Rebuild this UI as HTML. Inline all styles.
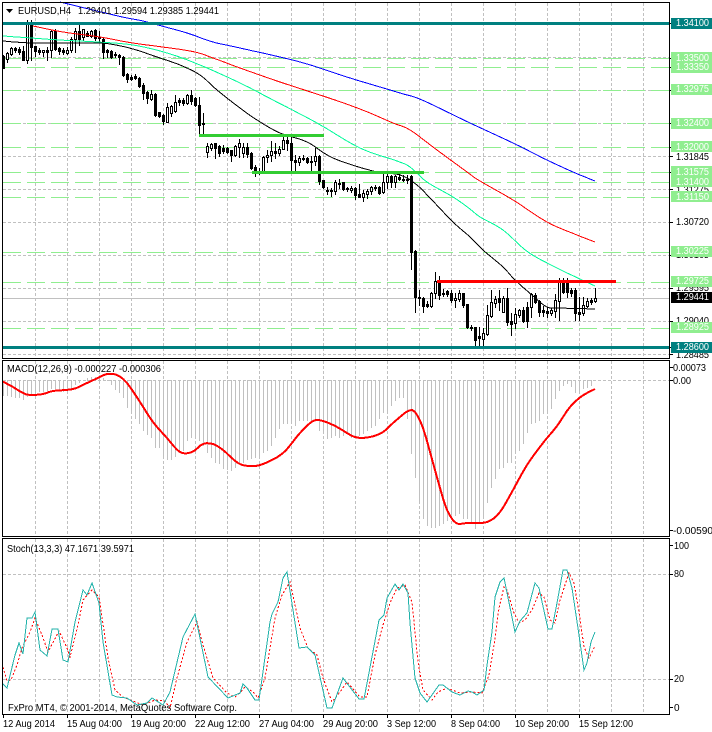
<!DOCTYPE html>
<html>
<head>
<meta charset="utf-8">
<style>
html,body{margin:0;padding:0;background:#fff;width:712px;height:732px;overflow:hidden}
svg{display:block;position:absolute;left:0;top:0}
text{font-family:"Liberation Sans",sans-serif;font-size:10px;fill:#000}
.w{fill:#fff}
.l{shape-rendering:crispEdges;fill:none}
polyline{shape-rendering:crispEdges}
</style>
</head>
<body>
<svg id="s" width="712" height="732" viewBox="0 0 712 732" xmlns="http://www.w3.org/2000/svg">
<!-- vertical grid -->
<g class="l" stroke="#c0c0c0" stroke-dasharray="3 2">
<path d="M35.5 3V358M67.5 3V358M99.5 3V358M131.5 3V358M163.5 3V358M195.5 3V358M227.5 3V358M259.5 3V358M291.5 3V358M323.5 3V358M355.5 3V358M387.5 3V358M419.5 3V358M451.5 3V358M483.5 3V358M515.5 3V358M547.5 3V358M579.5 3V358M611.5 3V358M643.5 3V358"/>
<path d="M35.5 361V536M67.5 361V536M99.5 361V536M131.5 361V536M163.5 361V536M195.5 361V536M227.5 361V536M259.5 361V536M291.5 361V536M323.5 361V536M355.5 361V536M387.5 361V536M419.5 361V536M451.5 361V536M483.5 361V536M515.5 361V536M547.5 361V536M579.5 361V536M611.5 361V536M643.5 361V536"/>
<path d="M35.5 539V714M67.5 539V714M99.5 539V714M131.5 539V714M163.5 539V714M195.5 539V714M227.5 539V714M259.5 539V714M291.5 539V714M323.5 539V714M355.5 539V714M387.5 539V714M419.5 539V714M451.5 539V714M483.5 539V714M515.5 539V714M547.5 539V714M579.5 539V714M611.5 539V714M643.5 539V714"/>
<path d="M3 57.5H669M3 90.5H669M3 123.5H669M3 156.5H669M3 189.5H669M3 222.5H669M3 255.5H669M3 288.5H669M3 321.5H669M3 354.5H669"/>
<path d="M3 380.5H669M3 574.5H669M3 679.5H669"/>
</g>
<!-- green level lines -->
<path class="l" stroke="#90ee90" stroke-dasharray="18 6" d="M3 58.5H669M3 67.5H669M3 90.5H669M3 123.5H669M3 147.5H669M3 172.5H669M3 182.5H669M3 197.5H669M3 252.5H669M3 282.5H669M3 328.5H669"/>
<path class="l" stroke="#c0c0c0" d="M3 298.5H669"/>
<g id="hist"></g>
<g id="c"></g>
<!-- moving averages -->
<g fill="none" stroke-width="1">
<polyline class="sm" stroke="#0000ff" points="60,2 118,16 143,21 158,25 187,33 213,42 240,48 300,62 350,78 400,93 422,100 470,123 513,143 547,160 573,172 595,181"/>
<polyline class="sm" stroke="#ff0000" points="33,26 63,32 100,37 133,43 190,51 213,58 240,68 280,82 335,100 365,111 393,123 410,130 437,150 467,172 480,181 513,200 547,222 577,235 595,242"/>
<polyline class="sm" stroke="#00fa9a" points="3,36 17,37 60,40 97,42 133,45 167,53 200,65 240,83 273,100 317,123 360,148 397,161 410,167 427,182 453,197 470,209 480,217 503,230 528,252 557,268 580,279 595,286"/>
<polyline class="sm" stroke="#000000" points="3,41 33,43 90,43 110,44 133,49 157,57 180,65 200,75 217,90 240,108 257,120 280,133 307,142 333,158 373,171 400,175 417,185 430,198 453,222 470,237 483,250 503,267 515,280 532,295 547,307 560,308 595,309"/>
</g>
<!-- objects -->
<rect x="3" y="22" width="666" height="3" fill="#008080"/>
<rect x="3" y="346" width="666" height="3" fill="#008080"/>
<rect x="199" y="134" width="125" height="3" fill="#32cd32"/>
<rect x="252" y="171" width="172" height="3" fill="#32cd32"/>
<rect x="437" y="280" width="179" height="3" fill="#ff0000"/>
<!-- MACD -->
<polyline class="sm" fill="none" stroke="#ff0000" stroke-width="2" points="3,381.7 13,387 23,393 30,395 43,394 53,391 73,389 87,383 100,377 107,374 117,375 127,383 140,402 153,422 167,438 180,452 192,452 203,444 213,444 223,450 238,463 250,466 263,464 283,453 300,433 313,421 323,421 337,427 355,437 370,437 383,432 393,423 408,411 415,412 423,428 430,452 440,488 447,510 456,523 467,523 487,522 500,512 513,490 527,465 543,443 557,426 570,407 582,396 595,389"/>
<!-- Stoch -->
<polyline fill="none" stroke="#ff0000" stroke-dasharray="2 2" points="3,667 7,681 11,680 17,665 22,648 30,632 35,618 42,635 48,652 59,631 67,648 70,657 78,625 83,600 92,590 99,597 108,658 115,690 123,697 133,701 143,705 155,700 165,701 170,708 177,678 187,642 197,622 203,645 213,678 227,693 235,697 240,693 245,687 253,692 258,698 265,678 275,618 282,595 290,582 300,628 308,648 317,655 323,678 332,702 340,692 347,682 360,697 367,697 375,655 383,625 390,603 397,588 405,585 412,602 418,662 423,690 432,700 438,692 447,688 460,693 472,692 482,693 489,675 494,645 499,608 504,587 507,590 514,613 519,623 525,620 532,610 539,593 544,597 550,620 555,623 560,600 569,573 574,583 579,612 584,647 589,658 595,646"/>
<polyline fill="none" stroke="#20b2aa" stroke-width="1" points="3,684 7,688 15,655 19,643 23,654 27,618 32,618 35,612 40,650 47,656 52,629 58,629 63,660 68,662 75,622 83,590 87,595 92,583 99,603 103,642 112,695 117,697 127,698 137,705 147,703 152,698 163,705 170,692 183,637 195,614 208,677 228,698 240,693 243,684 247,688 255,700 259,700 270,622 272,614 278,602 283,578 287,572 299,648 307,647 315,655 327,708 332,708 343,678 359,699 364,699 379,620 384,615 387,598 395,584 399,590 403,584 408,593 410,623 415,678 420,693 427,702 439,685 443,685 452,692 460,695 468,691 472,692 477,695 484,690 487,665 492,632 495,597 500,582 504,578 515,632 520,621 527,613 535,583 539,588 548,629 552,629 557,603 563,570 567,570 572,588 579,635 584,670 587,663 591,642 595,632"/>
<!-- frames -->
<g fill="#000">
<rect x="2" y="2" width="668" height="1"/>
<rect x="2" y="358" width="668" height="1"/>
<rect x="2" y="360" width="668" height="1"/>
<rect x="2" y="536" width="668" height="1"/>
<rect x="2" y="538" width="668" height="1"/>
<rect x="2" y="714" width="668" height="1"/>
<rect x="2" y="2" width="1" height="356"/>
<rect x="2" y="360" width="1" height="176"/>
<rect x="2" y="538" width="1" height="176"/>
<rect x="669" y="2" width="1" height="356"/>
<rect x="669" y="360" width="1" height="176"/>
<rect x="669" y="538" width="1" height="176"/>
<path d="M670 23h3v1h-3zM670 58h3v1h-3zM670 67h3v1h-3zM670 90h3v1h-3zM670 123h3v1h-3zM670 147h3v1h-3zM670 156h3v1h-3zM670 172h3v1h-3zM670 189h3v1h-3zM670 222h3v1h-3zM670 255h3v1h-3zM670 288h3v1h-3zM670 321h3v1h-3zM670 347h3v1h-3zM670 354h3v1h-3zM670 367h3v1h-3zM670 380h3v1h-3zM670 530h3v1h-3zM670 545h3v1h-3zM670 574h3v1h-3zM670 679h3v1h-3zM670 707h3v1h-3z"/>
<path d="M3 715h1v3h-1zM67 715h1v3h-1zM131 715h1v3h-1zM195 715h1v3h-1zM259 715h1v3h-1zM323 715h1v3h-1zM387 715h1v3h-1zM451 715h1v3h-1zM515 715h1v3h-1zM579 715h1v3h-1z"/>
<path d="M6 9h7l-3.5 4z"/>
</g>
<!-- chart texts -->
<text x="18" y="14" textLength="53" lengthAdjust="spacingAndGlyphs">EURUSD,H4</text>
<text x="78" y="14" textLength="141" lengthAdjust="spacingAndGlyphs">1.29401 1.29594 1.29385 1.29441</text>
<text x="7" y="372" textLength="154" lengthAdjust="spacingAndGlyphs">MACD(12,26,9) -0.000227 -0.000306</text>
<text x="7" y="552" textLength="127" lengthAdjust="spacingAndGlyphs">Stoch(13,3,3) 47.1671 39.5971</text>
<text x="8" y="711" textLength="229" lengthAdjust="spacingAndGlyphs">FxPro MT4, © 2001-2014, MetaQuotes Software Corp.</text>
<!-- price axis: plain -->
<g>
<text x="676" y="160" textLength="33" lengthAdjust="spacingAndGlyphs">1.31845</text>
<text x="676" y="193" textLength="33" lengthAdjust="spacingAndGlyphs">1.31275</text>
<text x="676" y="225" textLength="33" lengthAdjust="spacingAndGlyphs">1.30720</text>
<text x="676" y="258" textLength="33" lengthAdjust="spacingAndGlyphs">1.30165</text>
<text x="676" y="291" textLength="33" lengthAdjust="spacingAndGlyphs">1.29595</text>
<text x="676" y="324" textLength="33" lengthAdjust="spacingAndGlyphs">1.29040</text>
<text x="676" y="358" textLength="33" lengthAdjust="spacingAndGlyphs">1.28485</text>
</g>
<!-- price axis: boxed -->
<g fill="#90ee90">
<rect x="671" y="52" width="41" height="11"/>
<rect x="671" y="62" width="41" height="11"/>
<rect x="671" y="84" width="41" height="11"/>
<rect x="671" y="118" width="41" height="11"/>
<rect x="671" y="141" width="41" height="11"/>
<rect x="671" y="166" width="41" height="11"/>
<rect x="671" y="176" width="41" height="11"/>
<rect x="671" y="191" width="41" height="11"/>
<rect x="671" y="246" width="41" height="11"/>
<rect x="671" y="276" width="41" height="11"/>
<rect x="671" y="322" width="41" height="11"/>
</g>
<rect x="671" y="18" width="41" height="11" fill="#008080"/>
<rect x="671" y="342" width="41" height="11" fill="#008080"/>
<rect x="671" y="292" width="41" height="11" fill="#000"/>
<g>
<text class="w" x="676" y="26" textLength="33" lengthAdjust="spacingAndGlyphs">1.34100</text>
<text class="w" x="676" y="61" textLength="33" lengthAdjust="spacingAndGlyphs">1.33500</text>
<text class="w" x="676" y="70" textLength="33" lengthAdjust="spacingAndGlyphs">1.33350</text>
<text class="w" x="676" y="92" textLength="33" lengthAdjust="spacingAndGlyphs">1.32975</text>
<text class="w" x="676" y="126" textLength="33" lengthAdjust="spacingAndGlyphs">1.32400</text>
<text class="w" x="676" y="150" textLength="33" lengthAdjust="spacingAndGlyphs">1.32000</text>
<text class="w" x="676" y="175" textLength="33" lengthAdjust="spacingAndGlyphs">1.31575</text>
<text class="w" x="676" y="185" textLength="33" lengthAdjust="spacingAndGlyphs">1.31400</text>
<text class="w" x="676" y="200" textLength="33" lengthAdjust="spacingAndGlyphs">1.31150</text>
<text class="w" x="676" y="254" textLength="33" lengthAdjust="spacingAndGlyphs">1.30225</text>
<text class="w" x="676" y="284" textLength="33" lengthAdjust="spacingAndGlyphs">1.29725</text>
<text class="w" x="676" y="300" textLength="33" lengthAdjust="spacingAndGlyphs">1.29441</text>
<text class="w" x="676" y="330" textLength="33" lengthAdjust="spacingAndGlyphs">1.28925</text>
<text class="w" x="676" y="350" textLength="33" lengthAdjust="spacingAndGlyphs">1.28600</text>
</g>
<!-- indicator axes -->
<text x="673" y="371" textLength="33" lengthAdjust="spacingAndGlyphs">0.00073</text>
<text x="673" y="384" textLength="18" lengthAdjust="spacingAndGlyphs">0.00</text>
<text x="673" y="534" textLength="40" lengthAdjust="spacingAndGlyphs">-0.00590</text>
<text x="674" y="549" textLength="15" lengthAdjust="spacingAndGlyphs">100</text>
<text x="674" y="577" textLength="10" lengthAdjust="spacingAndGlyphs">80</text>
<text x="674" y="682" textLength="10" lengthAdjust="spacingAndGlyphs">20</text>
<text x="674" y="711">0</text>
<!-- time axis -->
<text x="3" y="727" textLength="52" lengthAdjust="spacingAndGlyphs">12 Aug 2014</text>
<text x="67" y="727" textLength="55" lengthAdjust="spacingAndGlyphs">15 Aug 04:00</text>
<text x="131" y="727" textLength="55" lengthAdjust="spacingAndGlyphs">19 Aug 20:00</text>
<text x="195" y="727" textLength="55" lengthAdjust="spacingAndGlyphs">22 Aug 12:00</text>
<text x="259" y="727" textLength="55" lengthAdjust="spacingAndGlyphs">27 Aug 04:00</text>
<text x="323" y="727" textLength="55" lengthAdjust="spacingAndGlyphs">29 Aug 20:00</text>
<text x="387" y="727" textLength="49" lengthAdjust="spacingAndGlyphs">3 Sep 12:00</text>
<text x="451" y="727" textLength="49" lengthAdjust="spacingAndGlyphs">8 Sep 04:00</text>
<text x="515" y="727" textLength="54" lengthAdjust="spacingAndGlyphs">10 Sep 20:00</text>
<text x="579" y="727" textLength="54" lengthAdjust="spacingAndGlyphs">15 Sep 12:00</text>
</svg>
<script>
var D="55,68,56,68,b 52,62,53,59,w 47,55,48,54,w 47,52,48,50,b 47,54,49,52,b 46,60,51,60,b 20,63,24,60,w 20,60,23,47,b 46,56,46,51,b 48,54,50,52,b 50,56,50,52,w 47,60,50,52,b 30,57,31,50,w 29,50,31,49,b 47,54,48,51,b 48,54,50,52,b 47,54,50,53,w 37,52,39,50,w 28,52,31,39,w 22,45,31,39,b 29,40,29,37,w 31,36,33,36,b 30,37,31,36,w 29,40,30,38,b 31,41,37,38,b 37,58,39,52,b 49,57,50,52,b 50,58,51,57,b 52,57,54,55,b 54,64,55,57,b 56,76,57,75,b 73,82,74,79,b 75,80,77,79,b 74,79,76,78,b 77,87,78,86,b 83,99,85,93,b 91,103,92,98,b 90,100,94,99,w 93,116,94,115,b 112,117,112,116,b 114,124,115,121,b 103,122,107,122,w 105,116,106,113,w 95,112,102,111,w 98,105,100,102,b 98,105,100,103,b 94,104,95,103,w 90,104,95,101,b 97,106,98,105,b 97,135,105,125,b 113,134,123,124,b 143,157,146,152,w 143,150,144,148,w 143,158,143,148,b 145,156,146,153,b 145,153,148,151,b 147,153,148,152,b 150,161,150,155,b 145,156,146,155,w 139,157,143,147,w 143,157,147,153,w 143,157,147,154,b 152,169,153,168,b 165,176,167,172,b 168,174,171,172,b 156,173,157,172,w 150,162,155,157,w 141,161,151,155,w 143,158,151,153,b 146,155,149,153,w 137,149,140,149,w 135,150,140,143,b 137,170,143,160,b 155,171,160,162,b 156,165,158,162,w 155,160,158,159,b 157,163,158,162,b 156,171,161,162,b 148,165,156,161,w 155,184,156,181,b 180,188,180,187,b 187,194,190,191,b 188,196,190,191,b 180,194,182,191,w 179,188,183,184,b 182,190,182,189,b 187,191,188,189,b 186,192,188,190,w 187,199,188,195,b 184,197,194,197,b 190,201,193,197,w 189,198,191,194,w 186,194,187,191,w 185,190,187,188,b 186,194,187,193,b 173,193,182,192,w 171,188,176,182,w 175,187,176,182,b 175,187,176,182,w 174,180,177,179,b 175,181,179,180,b 175,183,179,180,b 175,269,176,252,b 250,312,251,297,b 290,305,297,298,b 297,312,298,306,b 301,307,304,306,b 292,307,293,306,w 272,298,281,293,w 276,299,281,295,b 289,296,293,294,b 290,296,291,294,b 290,302,293,300,b 293,307,298,300,w 290,301,293,299,w 293,307,293,305,b 304,328,304,327,b 325,330,327,328,b 327,345,327,340,b 327,348,336,338,b 328,345,333,339,w 305,335,315,334,w 290,317,302,316,w 296,307,299,303,w 290,310,298,302,b 296,312,298,312,w 288,325,298,322,b 313,335,321,324,b 308,328,314,323,w 309,317,310,315,w 307,322,310,321,b 302,327,307,321,b 293,317,294,307,w 293,303,295,302,b 300,316,301,312,b 306,316,310,312,b 307,317,311,313,b 308,315,310,313,w 294,317,300,311,w 278,320,281,301,w 278,293,281,292,b 278,297,282,292,b 288,296,290,293,b 288,320,290,313,b 297,320,312,314,b 297,315,305,313,w 298,307,301,306,w 298,304,300,302,b 288,302,298,301,w".split(" ");
var H=[395,395,396,397,397,399,396,394,392,391,391,390,388,388,389,391,390,388,384,382,380,378,377,377,375,378,380,384,389,392,397,407,412,418,423,430,434,437,447,447,455,459,459,456,452,450,440,437,438,440,445,452,457,462,463,468,469,470,467,463,462,459,458,457,455,452,450,445,437,428,423,423,423,425,420,420,420,420,420,430,433,438,437,435,437,435,433,437,435,435,433,430,427,425,418,412,410,405,400,397,397,418,453,477,502,518,525,527,527,525,523,520,518,515,513,518,518,523,528,523,517,502,487,478,468,467,462,462,453,450,443,432,423,422,420,413,412,408,398,390,385,383,386,392,390,388,387,385];
var c="",h="";
D.forEach(function(s,i){var p=s.split(","),x=3+4*i,a=+p[0],l=+p[1],t=+p[2],b=+p[3];
c+='<rect x="'+x+'" y="'+a+'" width="1" height="'+(l-a+1)+'" fill="#000"/>';
c+='<rect x="'+(x-1)+'" y="'+t+'" width="3" height="'+(b-t+1)+'" fill="#000"/>';
if(p[4]=="w"&&b-t>1)c+='<rect x="'+x+'" y="'+(t+1)+'" width="1" height="'+(b-t-1)+'" fill="#fff"/>';});
H.forEach(function(v,i){var x=3+4*i,t=Math.min(v,380),n=Math.abs(v-380)+1;
h+='<rect x="'+x+'" y="'+t+'" width="1" height="'+n+'" fill="#c0c0c0"/>';});
document.getElementById("c").innerHTML=c;
document.getElementById("hist").innerHTML=h;
/* round the hand-measured indicator curves with a Catmull-Rom subdivision */
Array.prototype.forEach.call(document.querySelectorAll(".sm"),function(e){
var P=e.getAttribute("points").split(" ").map(function(q){return q.split(",").map(Number)}),o=[];
for(var i=0;i<P.length-1;i++){var a=P[Math.max(i-1,0)],b=P[i],d=P[i+1],f=P[Math.min(i+2,P.length-1)];
var n=Math.max(2,Math.round((d[0]-b[0])/3));
for(var j=0;j<n;j++){var u=j/n,g=[0,1].map(function(k){return .5*(2*b[k]+(d[k]-a[k])*u+(2*a[k]-5*b[k]+4*d[k]-f[k])*u*u+(3*b[k]-a[k]-3*d[k]+f[k])*u*u*u)});
o.push(g[0].toFixed(1)+","+g[1].toFixed(1));}}
var z=P[P.length-1];o.push(z[0]+","+z[1]);e.setAttribute("points",o.join(" "));});
</script>
</body>
</html>
